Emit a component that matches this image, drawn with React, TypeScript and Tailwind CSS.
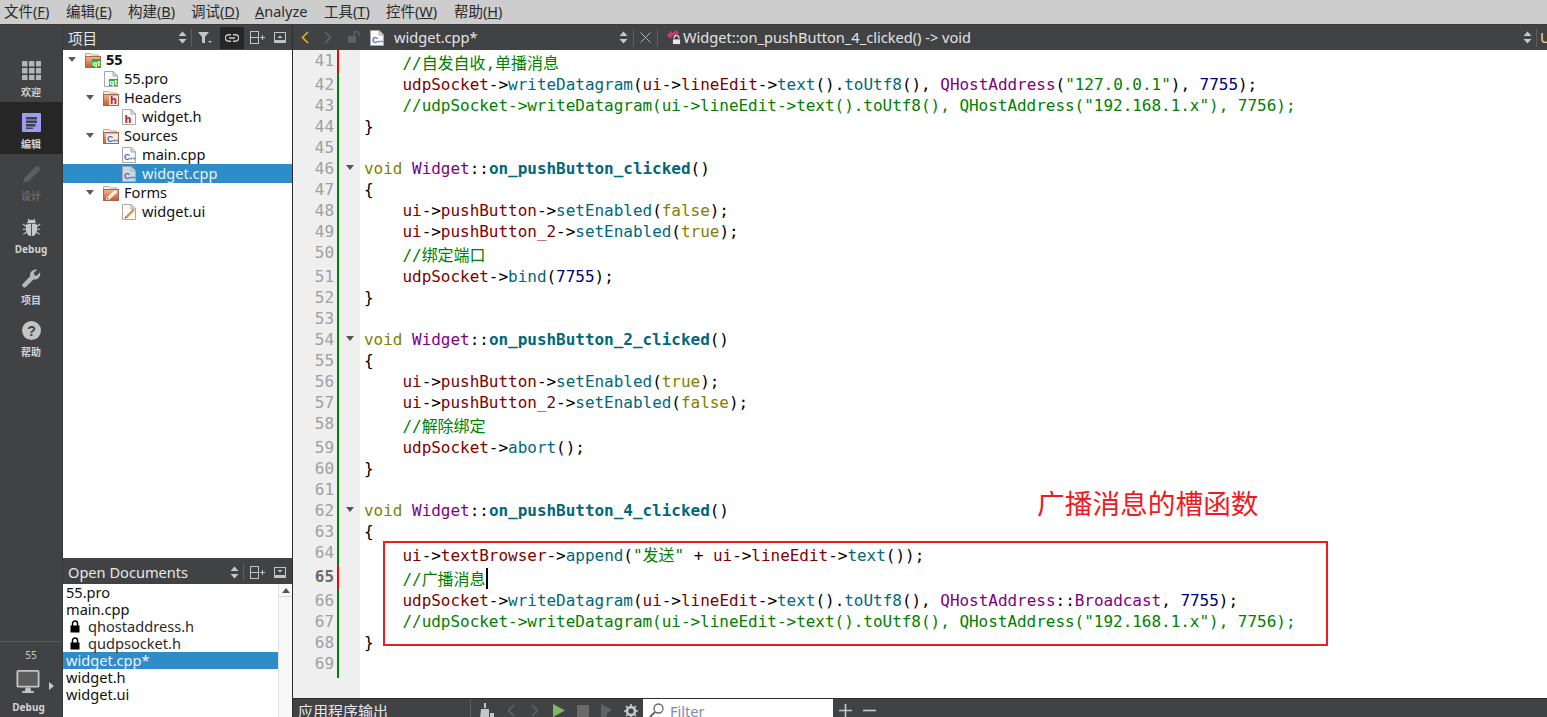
import React from "react";

const UI = "[font-family:'Noto_Sans','Noto_Sans_CJK_SC',sans-serif]";
const cls: Record<string, string> = {
  m: "text-[#800000]",
  f: "text-[#00677c]",
  b: "text-[#00677c] font-bold",
  c: "text-[#008000]",
  s: "text-[#008000]",
  n: "text-[#000080]",
  k: "text-[#808000]",
  t: "text-[#800080]",
};

// token markup: {m|udpSocket} etc.
function Code({ src }: { src: string }) {
  const parts = src.split(/(\{[a-z]\|[^}]*\})/).filter(Boolean);
  return (
    <>
      {parts.map((p, i) => {
        const r = p.match(/^\{([a-z])\|([^}]*)\}$/);
        return r ? (
          <span key={i} className={cls[r[1]]}>
            {r[2]}
          </span>
        ) : (
          <span key={i}>{p}</span>
        );
      })}
    </>
  );
}

const W = "{m|ui}->{m|lineEdit}->{f|text}().{f|toUtf8}()";
const lines: { n: number; src: string; tall?: boolean; red?: boolean; fold?: boolean }[] = [
  { n: 41, src: "    {c|//自发自收,单播消息}", tall: true, red: true },
  { n: 42, src: `    {m|udpSocket}->{f|writeDatagram}(${W}, {t|QHostAddress}({s|"127.0.0.1"}), {n|7755});` },
  { n: 43, src: '    {c|//udpSocket->writeDatagram(ui->lineEdit->text().toUtf8(), QHostAddress("192.168.1.x"), 7756);}' },
  { n: 44, src: "}" },
  { n: 45, src: "" },
  { n: 46, src: "{k|void} {t|Widget}::{b|on_pushButton_clicked}()", fold: true },
  { n: 47, src: "{" },
  { n: 48, src: "    {m|ui}->{m|pushButton}->{f|setEnabled}({k|false});" },
  { n: 49, src: "    {m|ui}->{m|pushButton_2}->{f|setEnabled}({k|true});" },
  { n: 50, src: "    {c|//绑定端口}", tall: true },
  { n: 51, src: "    {m|udpSocket}->{f|bind}({n|7755});" },
  { n: 52, src: "}" },
  { n: 53, src: "" },
  { n: 54, src: "{k|void} {t|Widget}::{b|on_pushButton_2_clicked}()", fold: true },
  { n: 55, src: "{" },
  { n: 56, src: "    {m|ui}->{m|pushButton}->{f|setEnabled}({k|true});" },
  { n: 57, src: "    {m|ui}->{m|pushButton_2}->{f|setEnabled}({k|false});" },
  { n: 58, src: "    {c|//解除绑定}", tall: true },
  { n: 59, src: "    {m|udpSocket}->{f|abort}();" },
  { n: 60, src: "}" },
  { n: 61, src: "" },
  { n: 62, src: "{k|void} {t|Widget}::{b|on_pushButton_4_clicked}()", fold: true },
  { n: 63, src: "{" },
  { n: 64, src: `    {m|ui}->{m|textBrowser}->{f|append}({s|"发送"} + ${"{m|ui}->{m|lineEdit}->{f|text}()"});`, tall: true },
  { n: 65, src: "    {c|//广播消息}", tall: true, red: true },
  { n: 66, src: `    {m|udpSocket}->{f|writeDatagram}(${W}, {t|QHostAddress}::{t|Broadcast}, {n|7755});` },
  { n: 67, src: '    {c|//udpSocket->writeDatagram(ui->lineEdit->text().toUtf8(), QHostAddress("192.168.1.x"), 7756);}' },
  { n: 68, src: "}" },
  { n: 69, src: "" },
];

function Updown({ className = "" }: { className?: string }) {
  return (
    <svg width="9" height="13" viewBox="0 0 9 13" className={className}>
      <path d="M4.5 0.5 L8.5 5 H0.5 Z M0.5 8 H8.5 L4.5 12.5 Z" fill="#c8c8c8" />
    </svg>
  );
}

function SplitIcon() {
  return (
    <svg width="15" height="13" viewBox="0 0 15 13" fill="none" stroke="#c4c4c4" strokeWidth="1">
      <rect x="0.5" y="0.5" width="8" height="12" />
      <path d="M0.5 6.5 H8.5 M10 6.5 H15 M12.5 4 V9" />
    </svg>
  );
}

function CloseBox({ down }: { down?: boolean }) {
  return (
    <svg width="12" height="11" viewBox="0 0 12 11">
      <rect x="0.5" y="0.5" width="11" height="10" fill="none" stroke="#c4c4c4" />
      <rect x="0" y="8" width="12" height="3" fill="#c4c4c4" />
      <path d={down ? "M3.5 3 H8.5 L6 5.5 Z" : "M3.5 6 H8.5 L6 3.5 Z"} fill="#c4c4c4" />
    </svg>
  );
}

function Sep() {
  return <div className="w-px h-[18px] bg-[#5c5e61]" />;
}

function Arrow() {
  return (
    <svg width="8" height="5" viewBox="0 0 8 5" className="block">
      <path d="M0 0 H8 L4 5 Z" fill="#5a5a5a" />
    </svg>
  );
}

function CppMark({ x, y, fill }: { x: number; y: number; fill: string }) {
  return (
    <text x={x} y={y} fontWeight="700" fill={fill} fontFamily="Liberation Sans" fontSize="8.5" letterSpacing="-0.6">
      C<tspan fontSize="5.5">++</tspan>
    </text>
  );
}

function Folder({ kind }: { kind: "qt" | "h" | "cpp" | "ui" }) {
  return (
    <svg width="16" height="16" viewBox="0 0 16 16">
      <defs>
        <linearGradient id="fold" x1="0" y1="0" x2="0" y2="1">
          <stop offset="0" stopColor="#f0b898" />
          <stop offset="1" stopColor="#c8562c" />
        </linearGradient>
      </defs>
      <path d="M0.5 1.5 H6 L7.5 3 H13.5 V5 H0.5 Z" fill="#f6f3ee" stroke="#b0a898" />
      <rect x="0.5" y="4.5" width="15" height="11" fill="url(#fold)" stroke="#a8664a" />
      {kind === "qt" && (
        <>
          <rect x="7" y="7" width="9" height="8" fill="#2faa2f" />
          <text x="11.5" y="13.5" textAnchor="middle" fontSize="7" fontWeight="700" fill="#fff" fontFamily="DejaVu Sans">qt</text>
        </>
      )}
      {kind === "h" && (
        <>
          <rect x="6" y="6" width="9" height="9" fill="#f8e8e0" />
          <text x="10.5" y="14" textAnchor="middle" fontSize="10" fontWeight="700" fill="#c0282d" fontFamily="DejaVu Sans">h</text>
        </>
      )}
      {kind === "cpp" && (
        <>
          <rect x="3" y="6" width="12" height="9" fill="#f8ece4" />
          <CppMark x={4} y={13.5} fill="#3c64b4" />
        </>
      )}
      {kind === "ui" && (
        <>
          <path d="M3 13 L12 5 L14.5 7 L6 15 H3 Z" fill="#fff0d8" />
          <path d="M3.5 14.5 L4.5 12.5 L6 14 Z" fill="#8a4a1c" />
        </>
      )}
    </svg>
  );
}

function FileIcon({ kind, sel }: { kind: "qt" | "h" | "cpp" | "ui"; sel?: boolean }) {
  return (
    <svg width="14" height="16" viewBox="0 0 14 16">
      <path d="M0.5 0.5 H9 L13.5 5 V15.5 H0.5 Z" fill={sel ? "#c9d9e6" : "#fbfbfb"} stroke="#a8a8a8" />
      <path d="M9 0.5 V5 H13.5 Z" fill="#e4e4e4" stroke="#a8a8a8" />
      {kind === "qt" && (
        <>
          <rect x="5" y="8" width="9" height="7" fill="#2faa2f" />
          <text x="9.5" y="14" textAnchor="middle" fontSize="7" fontWeight="700" fill="#fff" fontFamily="DejaVu Sans">qt</text>
        </>
      )}
      {kind === "h" && (
        <text x="6" y="14" textAnchor="middle" fontSize="10" fontWeight="700" fill="#c0282d" fontFamily="DejaVu Sans">h</text>
      )}
      {kind === "cpp" && <CppMark x={2} y={13} fill="#3c64d4" />}
      {kind === "ui" && (
        <>
          <path d="M3.5 12.5 L11 5 L12.5 6.5 L5 14 Z" fill="#e08a2c" />
          <path d="M2.5 14.5 L3.5 12.5 L5 14 Z" fill="#5a3a1c" />
        </>
      )}
    </svg>
  );
}

const treeIndent = ["pl-[5px]", "pl-[23px]", "pl-[41px]"];
const tree: { lvl: number; label: string; folder?: "qt" | "h" | "cpp" | "ui"; file?: "qt" | "h" | "cpp" | "ui"; bold?: boolean; sel?: boolean }[] = [
  { lvl: 0, label: "55", folder: "qt", bold: true },
  { lvl: 1, label: "55.pro", file: "qt" },
  { lvl: 1, label: "Headers", folder: "h" },
  { lvl: 2, label: "widget.h", file: "h" },
  { lvl: 1, label: "Sources", folder: "cpp" },
  { lvl: 2, label: "main.cpp", file: "cpp" },
  { lvl: 2, label: "widget.cpp", file: "cpp", sel: true },
  { lvl: 1, label: "Forms", folder: "ui" },
  { lvl: 2, label: "widget.ui", file: "ui" },
];

function RailLabel({ children, dim }: { children: React.ReactNode; dim?: boolean }) {
  return (
    <div className={`text-[10px] leading-[14px] font-bold text-center mt-[5px] ${dim ? "text-[#6a6a6a]" : "text-[#cfd3d6]"}`}>{children}</div>
  );
}

function Lock() {
  return (
    <svg width="10" height="13" viewBox="0 0 10 13">
      <path d="M2.5 6 V3.5 A2.5 2.5 0 0 1 7.5 3.5 V6" fill="none" stroke="#000" strokeWidth="1.5" />
      <rect x="0.5" y="5.5" width="9" height="7" fill="#000" />
    </svg>
  );
}

const menu: { a: string; u: string; z: string; cls: string }[] = [
  { a: "文件(", u: "F", z: ")", cls: "w-[62px]" },
  { a: "编辑(", u: "E", z: ")", cls: "w-[62px]" },
  { a: "构建(", u: "B", z: ")", cls: "w-[63px]" },
  { a: "调试(", u: "D", z: ")", cls: "w-[64px]" },
  { a: "", u: "A", z: "nalyze", cls: "w-[69px]" },
  { a: "工具(", u: "T", z: ")", cls: "w-[62px]" },
  { a: "控件(", u: "W", z: ")", cls: "w-[68px]" },
  { a: "帮助(", u: "H", z: ")", cls: "w-[60px]" },
];

export default function App() {
  return (
    <div className={`${UI} w-[1547px] h-[717px] overflow-hidden flex flex-col bg-white text-[14.6px]`}>
      {/* menu bar */}
      <div className="h-[25px] shrink-0 bg-[#cdcdcd] border-b border-[#3a3a3a] flex items-center pl-[4px] text-[#2a2a2a] text-[14.5px]">
        {menu.map((m) => (
          <div key={m.u} className={m.cls}>
            {m.a}
            <span className="underline">{m.u}</span>
            {m.z}
          </div>
        ))}
      </div>

      <div className="flex-1 flex min-h-0">
        {/* left rail */}
        <div className="w-[63px] shrink-0 bg-[#404244] flex flex-col border-r border-[#37393b]">
          <div className="h-[25px] shrink-0" />
          <div className="h-[52px] flex flex-col items-center pt-[11px]">
            <svg width="19" height="19" viewBox="0 0 19 19" fill="#b4b4b4">
              {[0, 7, 14].map((y) =>
                [0, 7, 14].map((x) => <rect key={`${x}-${y}`} x={x} y={y} width="5.5" height="5.5" rx="0.7" />)
              )}
            </svg>
            <RailLabel>欢迎</RailLabel>
          </div>
          <div className="h-[52px] bg-[#262626] flex flex-col items-center pt-[11px]">
            <svg width="19" height="19" viewBox="0 0 19 19">
              <rect width="19" height="19" rx="1" fill="#9a9df0" />
              <path d="M4 4 H15 V6.5 H4 Z M4 7.5 H15 V10 H4 Z M4 11 H13.5 V13.5 H4 Z M4 14.5 H11 V16 H4 Z" fill="#3f4150" />
            </svg>
            <RailLabel>编辑</RailLabel>
          </div>
          <div className="h-[52px] flex flex-col items-center pt-[11px]">
            <svg width="19" height="19" viewBox="0 0 20 20">
              <path d="M1 19 L3 13 L14 2 A2 2 0 0 1 18 6 L7 17 Z" fill="#5b5d60" />
            </svg>
            <RailLabel dim>设计</RailLabel>
          </div>
          <div className="h-[52px] flex flex-col items-center pt-[12px]">
            <svg width="19" height="19" viewBox="0 0 20 22">
              <path d="M5 6 A5 4 0 0 1 15 6 Z" fill="#c8c8c8" />
              <path d="M3.5 8 C3.5 7 9.5 7 9.5 7 V21 C6 21 3.5 17 3.5 13 Z M10.5 7 C10.5 7 16.5 7 16.5 8 V13 C16.5 17 14 21 10.5 21 Z" fill="#c8c8c8" />
              <path d="M6 1 L7.5 3.5 M14 1 L12.5 3.5 M0 7 L3.5 9.5 M20 7 L16.5 9.5 M0 13 H3.5 M20 13 H16.5 M0.5 19 L4 16.5 M19.5 19 L16 16.5" stroke="#c8c8c8" strokeWidth="1.2" />
            </svg>
            <RailLabel>Debug</RailLabel>
          </div>
          <div className="h-[52px] flex flex-col items-center pt-[11px]">
            <svg width="19" height="19" viewBox="0 0 20 20">
              <path d="M19 3.5 L15.5 7 L13 6.5 L12.5 4 L16 0.8 A6 6 0 0 0 8.5 7.5 L1 15.5 A2.2 2.2 0 0 0 4.3 18.8 L12 11 A6 6 0 0 0 19 3.5 Z" fill="#b8b8b8" />
            </svg>
            <RailLabel>项目</RailLabel>
          </div>
          <div className="h-[52px] flex flex-col items-center pt-[11px]">
            <svg width="19" height="19" viewBox="0 0 20 20">
              <circle cx="10" cy="10" r="10" fill="#c4c4c4" />
              <text x="10" y="15.5" textAnchor="middle" fontSize="15" fontWeight="700" fill="#404244" fontFamily="Liberation Sans">?</text>
            </svg>
            <RailLabel>帮助</RailLabel>
          </div>
          <div className="flex-1" />
          <div className="border-t border-[#55575a] h-[76px] flex flex-col items-center pt-[7px]">
            <div className="text-[10px] leading-[13px] text-[#c8c8c8]">55</div>
            <div className="relative h-[24px] flex items-center mt-[8px] -ml-[7px]">
              <svg width="24" height="24" viewBox="0 0 25 26">
                <rect x="1" y="1" width="23" height="17" rx="1" fill="#5c5c5c" stroke="#c4c4c4" strokeWidth="2" />
                <path d="M10 19 H15 L16 23 H19 V25 H6 V23 H9 Z" fill="#c4c4c4" />
              </svg>
              <svg width="5" height="8" viewBox="0 0 5 8" className="absolute left-[33px] top-[12px]">
                <path d="M0 0 L5 4 L0 8 Z" fill="#c8c8c8" />
              </svg>
            </div>
            <div className="mt-[1px] -ml-[5px]"><RailLabel>Debug</RailLabel></div>
          </div>
        </div>

        {/* sidebar */}
        <div className="w-[230px] shrink-0 flex flex-col border-r border-[#2c2c2c]">
          <div className="h-[25px] shrink-0 bg-[#404244] flex items-center pl-[5px] pr-[6px] text-[#e8e8e8]">
            <span className="flex-1 pt-[2px]">项目</span>
            <Updown className="mr-[4px]" />
            <div className="mr-[6px]"><Sep /></div>
            <svg width="14" height="11" viewBox="0 0 14 11" className="mr-[8px]">
              <path d="M0 0 H11 L7 5 V11 H4 V5 Z M10 9 H14 L12 11 Z" fill="#c4c4c4" />
            </svg>
            <div className="w-[24px] h-[22px] bg-[#262626] flex items-center justify-center mr-[6px]">
              <svg width="14" height="8" viewBox="0 0 14 8" fill="none" stroke="#c8c8c8" strokeWidth="1.4">
                <path d="M6 0.8 H3.5 A3.2 3.2 0 0 0 3.5 7.2 H6 M8 0.8 H10.5 A3.2 3.2 0 0 1 10.5 7.2 H8 M4 4 H10" />
              </svg>
            </div>
            <div className="mr-[9px]"><SplitIcon /></div>
            <CloseBox />
          </div>
          <div className="h-[508px] shrink-0 bg-white text-[#111]">
            {tree.map((r) => (
              <div
                key={r.label}
                className={`h-[19px] flex items-center ${treeIndent[r.lvl]} ${r.sel ? "bg-[#2e8cc8] text-[#e8f2f9]" : ""}`}
              >
                <div className="w-[17px] shrink-0">{r.folder && <Arrow />}</div>
                <div className="w-[16px] shrink-0 flex justify-center">
                  {r.folder ? <Folder kind={r.folder} /> : <FileIcon kind={r.file!} sel={r.sel} />}
                </div>
                <span className={`ml-[5px] ${r.bold ? "font-bold" : ""}`}>{r.label}</span>
              </div>
            ))}
          </div>
          <div className="h-[2px] shrink-0 bg-[#404244]" />
          <div className="h-[24px] shrink-0 bg-[#404244] flex items-center pl-[5px] pr-[6px] text-[#e8e8e8]">
            <span className="flex-1 pt-[1px]">Open Documents</span>
            <Updown className="mr-[4px]" />
            <div className="mr-[6px]"><Sep /></div>
            <div className="mr-[9px]"><SplitIcon /></div>
            <CloseBox down />
          </div>
          <div className="flex-1 flex min-h-0 bg-white text-[#111] leading-[17px]">
            <div className="flex-1">
              <div className="h-[17px] pl-[3px]">55.pro</div>
              <div className="h-[17px] pl-[3px]">main.cpp</div>
              <div className="h-[17px] pl-[7px] flex items-center"><Lock /><span className="ml-[8px] text-[#2a2a2a]">qhostaddress.h</span></div>
              <div className="h-[17px] pl-[7px] flex items-center"><Lock /><span className="ml-[8px] text-[#2a2a2a]">qudpsocket.h</span></div>
              <div className="h-[17px] pl-[3px] bg-[#2e8cc8] text-[#e8f2f9]">widget.cpp*</div>
              <div className="h-[17px] pl-[3px]">widget.h</div>
              <div className="h-[17px] pl-[3px]">widget.ui</div>
            </div>
            <div className="w-[14px] bg-[#f8f8f8] border-l border-[#e2e2e2]">
              <div className="h-[13px] border-b border-[#d8d8d8] flex items-center justify-center">
                <svg width="8" height="5" viewBox="0 0 8 5"><path d="M4 0 L8 5 H0 Z" fill="#555" /></svg>
              </div>
            </div>
          </div>
        </div>

        {/* editor area */}
        <div className="flex-1 min-w-0 flex flex-col">
          {/* tab bar */}
          <div className="h-[25px] shrink-0 bg-[#404244] flex items-center text-[#e4e4e4]">
            <svg width="8" height="13" viewBox="0 0 8 13" fill="none" stroke="#e8b820" strokeWidth="1.5" className="ml-[8px]"><path d="M7 1 L1.5 6.5 L7 12" /></svg>
            <svg width="8" height="13" viewBox="0 0 8 13" fill="none" stroke="#666" strokeWidth="1.5" className="ml-[15px]"><path d="M1 1 L6.5 6.5 L1 12" /></svg>
            <svg width="13" height="13" viewBox="0 0 13 13" className="ml-[16px]">
              <rect x="0" y="5" width="8" height="7" fill="#5f6163" />
              <path d="M6 5 V3 A2.5 2.5 0 0 1 11 3 V5" stroke="#5f6163" strokeWidth="1.5" fill="none" />
            </svg>
            <div className="ml-[9px] flex"><FileIcon kind="cpp" /></div>
            <span className="ml-[10px] w-[225px] pt-[1px]">widget.cpp*</span>
            <Updown className="mr-[5px]" />
            <Sep />
            <svg width="11" height="11" viewBox="0 0 11 11" stroke="#b0b0b0" strokeWidth="1" className="mx-[6px]"><path d="M0.5 0.5 L10.5 10.5 M10.5 0.5 L0.5 10.5" /></svg>
            <Sep />
            <div className="relative ml-[9px] w-[15px] h-[15px]">
              <svg width="12" height="11" viewBox="0 0 12 11" className="absolute left-0 top-0">
                <path d="M0 5 L4 1 L6 3 L9 0 L12 3 L8 7 L6 5 L3 9 Z" fill="#c0406a" />
              </svg>
              <svg width="9" height="10" viewBox="0 0 9 10" className="absolute left-[5px] top-[5px]">
                <path d="M2 4.5 V3 A2.5 2.5 0 0 1 7 3 V4.5" stroke="#e8e8e8" strokeWidth="1.2" fill="none" />
                <rect x="0.5" y="4" width="8" height="5.5" fill="#e8e8e8" stroke="#222" strokeWidth="0.6" />
              </svg>
            </div>
            <span className="ml-[1px] flex-1 pt-[1px]">Widget::on_pushButton_4_clicked() -&gt; void</span>
            <Updown className="mr-[4px]" />
            <Sep />
            <span className="ml-[3px] w-[7px] overflow-hidden text-[#f0d8b0]">U</span>
          </div>

          {/* editor */}
          <div className="flex-1 min-h-0 flex relative [font-family:'DejaVu_Sans_Mono','Noto_Sans_CJK_SC',monospace] text-[16px] tracking-[-0.03px]">
            <div className="w-[67px] shrink-0 bg-[#efefef] text-[#a0a0a0]">
              {lines.map((l) => (
                <div key={l.n} className={`flex ${l.n === 69 ? "h-[25px]" : l.tall ? "h-[24px]" : "h-[21px]"}`}>
                  <div className={`w-[41px] text-right leading-[21px] ${l.n === 65 ? "font-bold text-[#6a6a6a]" : ""}`}>{l.n}</div>
                  <div className="w-[3px]" />
                  <div className={`w-[2px] ${l.red ? "bg-[#ff0000]" : "bg-[#008000]"}`} />
                  <div className="w-[7px]" />
                  {l.fold && (
                    <svg width="8" height="5" viewBox="0 0 8 5" className="mt-[7px]"><path d="M0 0 H8 L4 5 Z" fill="#555" /></svg>
                  )}
                </div>
              ))}
            </div>
            <div className="flex-1 min-w-0 pl-[4px] text-black whitespace-pre">
              {lines.map((l) => (
                <div key={l.n} className={`leading-[21px] ${l.tall ? "h-[24px] pt-[3px]" : "h-[21px]"}`}>
                  <Code src={l.src} />
                  {l.n === 65 && <span className="inline-block w-[2px] h-[21px] bg-black align-top -mt-[1px]" />}
                </div>
              ))}
            </div>
            {/* annotation overlay */}
            <div className="absolute left-[90px] top-[491px] w-[945px] h-[105px] border-2 border-[#ed1c24]" />
            <div className="absolute left-[744px] top-[432px] text-[27.7px] leading-[40px] tracking-normal text-[#ed1c24] [font-family:'Noto_Sans_CJK_SC',sans-serif]">广播消息的槽函数</div>
          </div>

          {/* bottom pane bar */}
          <div className="h-[19px] shrink-0 bg-[#404244] border-t border-[#2c2c2c] flex items-start text-[#e8e8e8] overflow-hidden">
            <span className="ml-[5px] w-[172px] mt-[2px] leading-[20px] text-[15px]">应用程序输出</span>
            <div className="w-px h-[18px] bg-[#5c5e61] mr-[9px]" />
            <svg width="14" height="15" viewBox="0 0 14 15" className="mt-[4px]">
              <path d="M4 0 H6 V5 H4 Z M1 6 H9 V15 H0 Z M10 10 H14 V15 H10 Z" fill="#c4c4c4" />
            </svg>
            <svg width="8" height="13" viewBox="0 0 8 13" fill="none" stroke="#666" strokeWidth="1.3" className="ml-[13px] mt-[5px]"><path d="M7 1 L1.5 6.5 L7 12" /></svg>
            <svg width="8" height="13" viewBox="0 0 8 13" fill="none" stroke="#666" strokeWidth="1.3" className="ml-[16px] mt-[5px]"><path d="M1 1 L6.5 6.5 L1 12" /></svg>
            <svg width="12" height="13" viewBox="0 0 12 13" className="ml-[14px] mt-[5px]"><path d="M0 0 L12 6.5 L0 13 Z" fill="#7fb85f" /></svg>
            <div className="w-[12px] h-[12px] bg-[#6a6a6a] ml-[12px] mt-[6px]" />
            <svg width="14" height="14" viewBox="0 0 14 14" className="ml-[12px] mt-[5px]"><path d="M0 0 L11 6 L6 9 V14 H0 Z" fill="#5f6163" /></svg>
            <svg width="14" height="14" viewBox="0 0 14 14" className="ml-[9px] mt-[5px]">
              <circle cx="7" cy="7" r="4" fill="none" stroke="#c8c8c8" strokeWidth="2.6" />
              <path d="M7 0 V14 M0 7 H14 M2 2 L12 12 M12 2 L2 12" stroke="#c8c8c8" strokeWidth="1.6" />
              <circle cx="7" cy="7" r="2.6" fill="#404244" />
            </svg>
            <div className="ml-[5px] w-[190px] h-full bg-white flex items-start pl-[6px] shrink-0">
              <svg width="16" height="15" viewBox="0 0 16 15" fill="none" stroke="#666" strokeWidth="1.3" className="mt-[4px]">
                <circle cx="9.5" cy="5.5" r="4.5" />
                <path d="M6 9 L1 14" strokeWidth="2" />
              </svg>
              <span className="ml-[5px] mt-[2px] leading-[20px] text-[#7a8fa8]">Filter</span>
            </div>
            <svg width="13" height="13" viewBox="0 0 13 13" stroke="#c8c8c8" strokeWidth="1.6" className="ml-[6px] mt-[5px]"><path d="M0 6.5 H13 M6.5 0 V13" /></svg>
            <svg width="13" height="13" viewBox="0 0 13 13" stroke="#c8c8c8" strokeWidth="1.6" className="ml-[11px] mt-[5px]"><path d="M0 6.5 H13" /></svg>
          </div>
        </div>
      </div>
    </div>
  );
}
